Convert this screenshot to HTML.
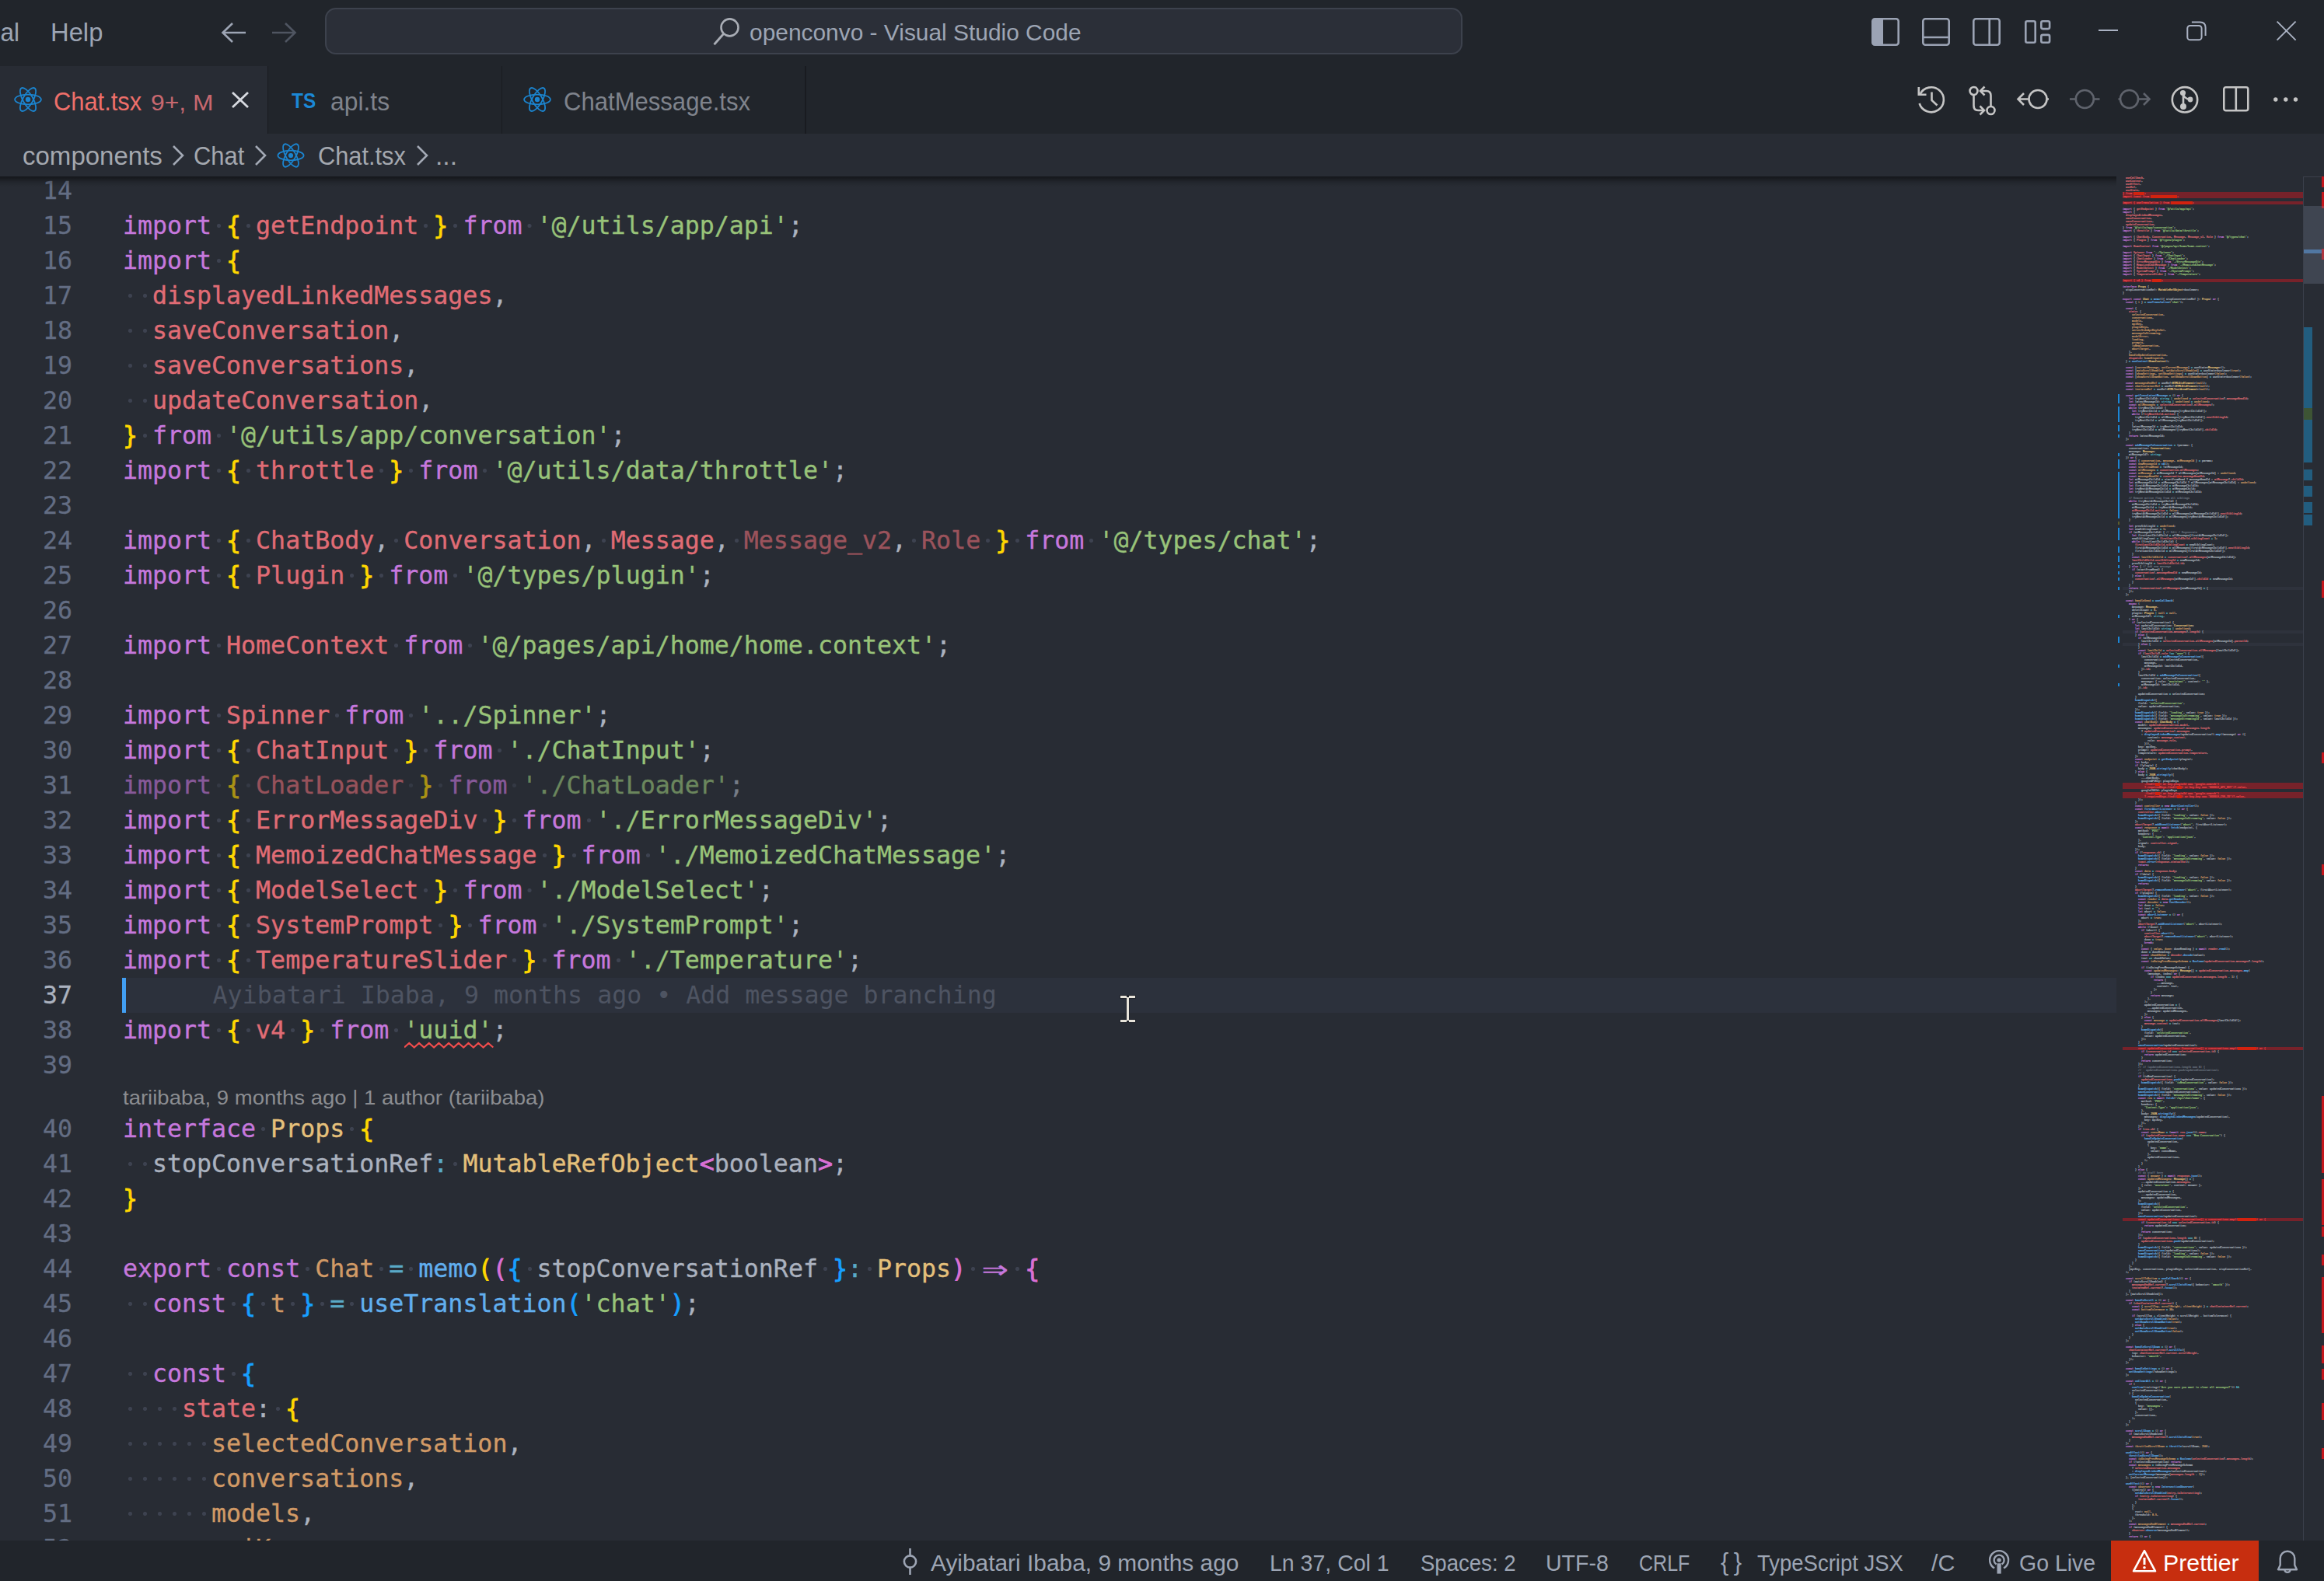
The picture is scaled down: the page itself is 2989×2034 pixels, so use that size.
<!DOCTYPE html><html lang="en"><head><meta charset="utf-8"><title>Chat.tsx - openconvo - Visual Studio Code</title><style>
*{box-sizing:border-box}
html,body{margin:0;padding:0}
body{width:2989px;height:2034px;overflow:hidden;position:relative;background:#282c34;font-family:"Liberation Sans","DejaVu Sans",sans-serif;color:#9da5b4}
.abs{position:absolute}
#title{left:0;top:0;width:2989px;height:85px;background:#21252b}
#tabs{left:0;top:85px;width:2989px;height:87px;background:#21252b}
#crumbs{left:0;top:172px;width:2989px;height:55px;background:#282c34}
#editor{left:0;top:227px;width:2722px;height:1755px;overflow:hidden;background:#282c34}
#status{left:0;top:1982px;width:2989px;height:52px;background:#21252b}
.ui{position:absolute;white-space:pre;line-height:1;transform-origin:0 0}
.ln{-webkit-text-stroke:.3px;position:absolute;left:0;width:93px;text-align:right;height:45px;line-height:45px;color:#636d83;font:31.6px/45px "DejaVu Sans Mono","Liberation Mono",monospace}
.cl{position:absolute;left:157.9px;height:45px;white-space:pre;font:31.6px/45px "DejaVu Sans Mono","Liberation Mono",monospace;color:#abb2bf}
.cl span,.cl i{font-style:normal}
.cl{-webkit-text-stroke:.35px}
.w{display:inline-block;width:19.03px;height:45px;vertical-align:top;background:radial-gradient(circle at 50% 50%,#3d4250 0,#3d4250 2.1px,rgba(61,66,80,0) 3px)}
.k{color:#c678dd}.v{color:#e06c75}.s{color:#98c379}.t{color:#e5c07b}.f{color:#61afef}.p{color:#abb2bf}.o{color:#5aaac8}.n{color:#d19a66}
.b1{color:#ffd700}.b2{color:#da70d6}.b3{color:#179fff}
.b1,.b2,.b3{-webkit-text-stroke:.8px}
.fd{opacity:.62}
.ar{display:inline-block;width:38.06px;text-align:center;letter-spacing:0;transform:scale(1.75,1.25);transform-origin:50% 58%}

#mmt{position:absolute;left:8px;top:0;margin:0;font:33.22px/40px "DejaVu Sans Mono","Liberation Mono",monospace;color:#abb2bf;white-space:pre;-webkit-text-stroke:2.5px;opacity:.9;transform:scale(.1);transform-origin:0 0}
#mmt span{-webkit-text-stroke:2.5px}
.mk{color:#c678dd}.mv{color:#e06c75}.ms{color:#98c379}.mt{color:#e5c07b}.mf{color:#61afef}.mp{color:#abb2bf}.mo{color:#56b6c2}.mn{color:#d19a66}.mc{color:#6b7280}.me{color:#f0484d}
</style></head><body>
<div id="editor" class="abs"><div class="abs" style="left:157px;top:1031px;width:2565px;height:45px;background:#2c313c"></div>
<div class="ln" style="top:-4px">14</div>
<div class="ln" style="top:41px">15</div>
<div class="cl" style="top:41px"><span class="k">import</span><i class="w"> </i><span class="b1">{</span><i class="w"> </i><span class="v">getEndpoint</span><i class="w"> </i><span class="b1">}</span><i class="w"> </i><span class="k">from</span><i class="w"> </i><span class="s">'@/utils/app/api'</span><span class="p">;</span></div>
<div class="ln" style="top:86px">16</div>
<div class="cl" style="top:86px"><span class="k">import</span><i class="w"> </i><span class="b1">{</span></div>
<div class="ln" style="top:131px">17</div>
<div class="cl" style="top:131px"><i class="w"> </i><i class="w"> </i><span class="v">displayedLinkedMessages</span><span class="p">,</span></div>
<div class="ln" style="top:176px">18</div>
<div class="cl" style="top:176px"><i class="w"> </i><i class="w"> </i><span class="v">saveConversation</span><span class="p">,</span></div>
<div class="ln" style="top:221px">19</div>
<div class="cl" style="top:221px"><i class="w"> </i><i class="w"> </i><span class="v">saveConversations</span><span class="p">,</span></div>
<div class="ln" style="top:266px">20</div>
<div class="cl" style="top:266px"><i class="w"> </i><i class="w"> </i><span class="v">updateConversation</span><span class="p">,</span></div>
<div class="ln" style="top:311px">21</div>
<div class="cl" style="top:311px"><span class="b1">}</span><i class="w"> </i><span class="k">from</span><i class="w"> </i><span class="s">'@/utils/app/conversation'</span><span class="p">;</span></div>
<div class="ln" style="top:356px">22</div>
<div class="cl" style="top:356px"><span class="k">import</span><i class="w"> </i><span class="b1">{</span><i class="w"> </i><span class="v">throttle</span><i class="w"> </i><span class="b1">}</span><i class="w"> </i><span class="k">from</span><i class="w"> </i><span class="s">'@/utils/data/throttle'</span><span class="p">;</span></div>
<div class="ln" style="top:401px">23</div>
<div class="ln" style="top:446px">24</div>
<div class="cl" style="top:446px"><span class="k">import</span><i class="w"> </i><span class="b1">{</span><i class="w"> </i><span class="v">ChatBody</span><span class="p">,</span><i class="w"> </i><span class="v">Conversation</span><span class="p">,</span><i class="w"> </i><span class="v">Message</span><span class="p">,</span><i class="w"> </i><span class="v fd">Message_v2</span><span class="p">,</span><i class="w"> </i><span class="v fd">Role</span><i class="w"> </i><span class="b1">}</span><i class="w"> </i><span class="k">from</span><i class="w"> </i><span class="s">'@/types/chat'</span><span class="p">;</span></div>
<div class="ln" style="top:491px">25</div>
<div class="cl" style="top:491px"><span class="k">import</span><i class="w"> </i><span class="b1">{</span><i class="w"> </i><span class="v">Plugin</span><i class="w"> </i><span class="b1">}</span><i class="w"> </i><span class="k">from</span><i class="w"> </i><span class="s">'@/types/plugin'</span><span class="p">;</span></div>
<div class="ln" style="top:536px">26</div>
<div class="ln" style="top:581px">27</div>
<div class="cl" style="top:581px"><span class="k">import</span><i class="w"> </i><span class="v">HomeContext</span><i class="w"> </i><span class="k">from</span><i class="w"> </i><span class="s">'@/pages/api/home/home.context'</span><span class="p">;</span></div>
<div class="ln" style="top:626px">28</div>
<div class="ln" style="top:671px">29</div>
<div class="cl" style="top:671px"><span class="k">import</span><i class="w"> </i><span class="v">Spinner</span><i class="w"> </i><span class="k">from</span><i class="w"> </i><span class="s">'../Spinner'</span><span class="p">;</span></div>
<div class="ln" style="top:716px">30</div>
<div class="cl" style="top:716px"><span class="k">import</span><i class="w"> </i><span class="b1">{</span><i class="w"> </i><span class="v">ChatInput</span><i class="w"> </i><span class="b1">}</span><i class="w"> </i><span class="k">from</span><i class="w"> </i><span class="s">'./ChatInput'</span><span class="p">;</span></div>
<div class="ln" style="top:761px">31</div>
<div class="cl" style="top:761px;opacity:.6"><span class="k">import</span><i class="w"> </i><span class="b1">{</span><i class="w"> </i><span class="v">ChatLoader</span><i class="w"> </i><span class="b1">}</span><i class="w"> </i><span class="k">from</span><i class="w"> </i><span class="s">'./ChatLoader'</span><span class="p">;</span></div>
<div class="ln" style="top:806px">32</div>
<div class="cl" style="top:806px"><span class="k">import</span><i class="w"> </i><span class="b1">{</span><i class="w"> </i><span class="v">ErrorMessageDiv</span><i class="w"> </i><span class="b1">}</span><i class="w"> </i><span class="k">from</span><i class="w"> </i><span class="s">'./ErrorMessageDiv'</span><span class="p">;</span></div>
<div class="ln" style="top:851px">33</div>
<div class="cl" style="top:851px"><span class="k">import</span><i class="w"> </i><span class="b1">{</span><i class="w"> </i><span class="v">MemoizedChatMessage</span><i class="w"> </i><span class="b1">}</span><i class="w"> </i><span class="k">from</span><i class="w"> </i><span class="s">'./MemoizedChatMessage'</span><span class="p">;</span></div>
<div class="ln" style="top:896px">34</div>
<div class="cl" style="top:896px"><span class="k">import</span><i class="w"> </i><span class="b1">{</span><i class="w"> </i><span class="v">ModelSelect</span><i class="w"> </i><span class="b1">}</span><i class="w"> </i><span class="k">from</span><i class="w"> </i><span class="s">'./ModelSelect'</span><span class="p">;</span></div>
<div class="ln" style="top:941px">35</div>
<div class="cl" style="top:941px"><span class="k">import</span><i class="w"> </i><span class="b1">{</span><i class="w"> </i><span class="v">SystemPrompt</span><i class="w"> </i><span class="b1">}</span><i class="w"> </i><span class="k">from</span><i class="w"> </i><span class="s">'./SystemPrompt'</span><span class="p">;</span></div>
<div class="ln" style="top:986px">36</div>
<div class="cl" style="top:986px"><span class="k">import</span><i class="w"> </i><span class="b1">{</span><i class="w"> </i><span class="v">TemperatureSlider</span><i class="w"> </i><span class="b1">}</span><i class="w"> </i><span class="k">from</span><i class="w"> </i><span class="s">'./Temperature'</span><span class="p">;</span></div>
<div class="ln" style="top:1031px;color:#abb2bf">37</div>
<div class="ln" style="top:1076px">38</div>
<div class="cl" style="top:1076px"><span class="k">import</span><i class="w"> </i><span class="b1">{</span><i class="w"> </i><span class="v">v4</span><i class="w"> </i><span class="b1">}</span><i class="w"> </i><span class="k">from</span><i class="w"> </i><span class="s sq">'uuid'</span><span class="p">;</span></div>
<div class="ln" style="top:1121px">39</div>
<div class="ln" style="top:1203px">40</div>
<div class="cl" style="top:1203px"><span class="k">interface</span><i class="w"> </i><span class="t">Props</span><i class="w"> </i><span class="b1">{</span></div>
<div class="ln" style="top:1248px">41</div>
<div class="cl" style="top:1248px"><i class="w"> </i><i class="w"> </i><span class="p">stopConversationRef</span><span class="o">:</span><i class="w"> </i><span class="t">MutableRefObject</span><span class="b2">&lt;</span><span class="p">boolean</span><span class="b2">&gt;</span><span class="p">;</span></div>
<div class="ln" style="top:1293px">42</div>
<div class="cl" style="top:1293px"><span class="b1">}</span></div>
<div class="ln" style="top:1338px">43</div>
<div class="ln" style="top:1383px">44</div>
<div class="cl" style="top:1383px"><span class="k">export</span><i class="w"> </i><span class="k">const</span><i class="w"> </i><span class="n">Chat</span><i class="w"> </i><span class="o">=</span><i class="w"> </i><span class="f">memo</span><span class="b1">(</span><span class="b2">(</span><span class="b3">{</span><i class="w"> </i><span class="p">stopConversationRef</span><i class="w"> </i><span class="b3">}</span><span class="o">:</span><i class="w"> </i><span class="t">Props</span><span class="b2">)</span><i class="w"> </i><span class="k ar">⇒</span><i class="w"> </i><span class="b2">{</span></div>
<div class="ln" style="top:1428px">45</div>
<div class="cl" style="top:1428px"><i class="w"> </i><i class="w"> </i><span class="k">const</span><i class="w"> </i><span class="b3">{</span><i class="w"> </i><span class="n">t</span><i class="w"> </i><span class="b3">}</span><i class="w"> </i><span class="o">=</span><i class="w"> </i><span class="f">useTranslation</span><span class="b3">(</span><span class="s">'chat'</span><span class="b3">)</span><span class="p">;</span></div>
<div class="ln" style="top:1473px">46</div>
<div class="ln" style="top:1518px">47</div>
<div class="cl" style="top:1518px"><i class="w"> </i><i class="w"> </i><span class="k">const</span><i class="w"> </i><span class="b3">{</span></div>
<div class="ln" style="top:1563px">48</div>
<div class="cl" style="top:1563px"><i class="w"> </i><i class="w"> </i><i class="w"> </i><i class="w"> </i><span class="v">state</span><span class="p">:</span><i class="w"> </i><span class="b1">{</span></div>
<div class="ln" style="top:1608px">49</div>
<div class="cl" style="top:1608px"><i class="w"> </i><i class="w"> </i><i class="w"> </i><i class="w"> </i><i class="w"> </i><i class="w"> </i><span class="n">selectedConversation</span><span class="p">,</span></div>
<div class="ln" style="top:1653px">50</div>
<div class="cl" style="top:1653px"><i class="w"> </i><i class="w"> </i><i class="w"> </i><i class="w"> </i><i class="w"> </i><i class="w"> </i><span class="n">conversations</span><span class="p">,</span></div>
<div class="ln" style="top:1698px">51</div>
<div class="cl" style="top:1698px"><i class="w"> </i><i class="w"> </i><i class="w"> </i><i class="w"> </i><i class="w"> </i><i class="w"> </i><span class="n">models</span><span class="p">,</span></div>
<div class="ln" style="top:1743px">52</div>
<div class="cl" style="top:1743px"><i class="w"> </i><i class="w"> </i><i class="w"> </i><i class="w"> </i><i class="w"> </i><i class="w"> </i><span class="n">apiKey</span><span class="p">,</span></div>
<div class="cl" style="top:1031px;left:273.6px;color:#4e5462;-webkit-text-stroke:0">Ayibatari Ibaba, 9 months ago • Add message branching</div>
<div class="abs" style="left:157px;top:1031px;width:5.3px;height:45px;background:#429ff3"></div>
<svg class="abs" style="left:519.5px;top:1113px" width="116" height="10" viewBox="0 0 116 10"><path d="M0 7.5 L6.3 2 L12.7 7.5 L19.0 2 L25.4 7.5 L31.8 2 L38.1 7.5 L44.4 2 L50.8 7.5 L57.1 2 L63.5 7.5 L69.8 2 L76.2 7.5 L82.5 2 L88.9 7.5 L95.2 2 L101.6 7.5 L107.9 2 L114.3 7.5" fill="none" stroke="#f14c4c" stroke-width="2.1"/></svg>
<div class="abs" style="left:0;top:0;width:2722px;height:13px;background:linear-gradient(rgba(0,0,0,.5),rgba(0,0,0,.18) 50%,rgba(0,0,0,0))"></div></div>
<div id="minimap" class="abs" style="left:2722px;top:227px;width:267px;height:1755px;overflow:hidden;background:#282c34">
<div class="abs" style="left:8px;top:20px;width:232px;height:4px;background:#77222a"></div>
<div class="abs" style="left:8px;top:24px;width:232px;height:4px;background:#77222a"></div>
<div class="abs" style="left:8px;top:32px;width:232px;height:4px;background:#77222a"></div>
<div class="abs" style="left:8px;top:132px;width:232px;height:4px;background:#77222a"></div>
<div class="abs" style="left:8px;top:780px;width:232px;height:4px;background:#77222a"></div>
<div class="abs" style="left:8px;top:784px;width:232px;height:4px;background:#77222a"></div>
<div class="abs" style="left:8px;top:792px;width:232px;height:4px;background:#77222a"></div>
<div class="abs" style="left:8px;top:796px;width:232px;height:4px;background:#77222a"></div>
<div class="abs" style="left:8px;top:1120px;width:232px;height:4px;background:#77222a"></div>
<div class="abs" style="left:8px;top:1340px;width:232px;height:4px;background:#77222a"></div>
<div class="abs" style="left:8px;top:528px;width:232px;height:4px;background:#2e323c"></div>
<div class="abs" style="left:8px;top:584px;width:232px;height:4px;background:#2e323c"></div>
<div class="abs" style="left:8px;top:600px;width:232px;height:4px;background:#2e323c"></div>
<div class="abs" style="left:2px;top:280px;width:2.2px;height:12px;background:#1b86d6"></div>
<div class="abs" style="left:2px;top:296px;width:2.2px;height:20px;background:#1b86d6"></div>
<div class="abs" style="left:2px;top:320px;width:2.2px;height:8px;background:#1b86d6"></div>
<div class="abs" style="left:2px;top:332px;width:2.2px;height:4px;background:#1b86d6"></div>
<div class="abs" style="left:2px;top:356px;width:2.2px;height:4px;background:#1b86d6"></div>
<div class="abs" style="left:2px;top:364px;width:2.2px;height:12px;background:#1b86d6"></div>
<div class="abs" style="left:2px;top:380px;width:2.2px;height:60px;background:#1b86d6"></div>
<div class="abs" style="left:2px;top:452px;width:2.2px;height:16px;background:#1b86d6"></div>
<div class="abs" style="left:2px;top:476px;width:2.2px;height:8px;background:#1b86d6"></div>
<div class="abs" style="left:2px;top:488px;width:2.2px;height:8px;background:#1b86d6"></div>
<div class="abs" style="left:2px;top:500px;width:2.2px;height:4px;background:#1b86d6"></div>
<div class="abs" style="left:2px;top:508px;width:2.2px;height:4px;background:#1b86d6"></div>
<div class="abs" style="left:2px;top:516px;width:2.2px;height:4px;background:#1b86d6"></div>
<div class="abs" style="left:2px;top:528px;width:2.2px;height:4px;background:#1b86d6"></div>
<div class="abs" style="left:2px;top:564px;width:2.2px;height:4px;background:#1b86d6"></div>
<div class="abs" style="left:2px;top:592px;width:2.2px;height:8px;background:#1b86d6"></div>
<div class="abs" style="left:2px;top:628px;width:2.2px;height:4px;background:#1b86d6"></div>
<div class="abs" style="left:2px;top:652px;width:2.2px;height:4px;background:#1b86d6"></div>
<div class="abs" style="left:2px;top:444px;width:2.2px;height:4px;background:#5b5d2c"></div>
<pre id="mmt">
  <span class="mv">useCallback</span><span class="mp">,</span>
  <span class="mv">useContext</span><span class="mp">,</span>
  <span class="mv">useEffect</span><span class="mp">,</span>
  <span class="mv">useRef</span><span class="mp">,</span>
  <span class="mv">useState</span><span class="mp">,</span>
<span class="me">} from 'react';</span>
<span class="me">import toast from 'react-hot-toast';</span>

<span class="me">import { useTranslation } from 'next-i18next';</span>

<span class="mk">import </span><span class="mp">{ </span><span class="mv">getEndpoint </span><span class="mp">} </span><span class="mk">from </span><span class="ms">'@/utils/app/api'</span><span class="mp">;</span>
<span class="mk">import </span><span class="mp">{</span>
  <span class="mv">displayedLinkedMessages</span><span class="mp">,</span>
  <span class="mv">saveConversation</span><span class="mp">,</span>
  <span class="mv">saveConversations</span><span class="mp">,</span>
  <span class="mv">updateConversation</span><span class="mp">,</span>
<span class="mp">} </span><span class="mk">from </span><span class="ms">'@/utils/app/conversation'</span><span class="mp">;</span>
<span class="mk">import </span><span class="mp">{ </span><span class="mv">throttle </span><span class="mp">} </span><span class="mk">from </span><span class="ms">'@/utils/data/throttle'</span><span class="mp">;</span>

<span class="mk">import </span><span class="mp">{ </span><span class="mv">ChatBody</span><span class="mp">, </span><span class="mv">Conversation</span><span class="mp">, </span><span class="mv">Message</span><span class="mp">, </span><span class="mv">Message_v2</span><span class="mp">, </span><span class="mv">Role </span><span class="mp">} </span><span class="mk">from </span><span class="ms">'@/types/chat'</span><span class="mp">;</span>
<span class="mk">import </span><span class="mp">{ </span><span class="mv">Plugin </span><span class="mp">} </span><span class="mk">from </span><span class="ms">'@/types/plugin'</span><span class="mp">;</span>

<span class="mk">import </span><span class="mv">HomeContext </span><span class="mk">from </span><span class="ms">'@/pages/api/home/home.context'</span><span class="mp">;</span>

<span class="mk">import </span><span class="mv">Spinner </span><span class="mk">from </span><span class="ms">'../Spinner'</span><span class="mp">;</span>
<span class="mk">import </span><span class="mp">{ </span><span class="mv">ChatInput </span><span class="mp">} </span><span class="mk">from </span><span class="ms">'./ChatInput'</span><span class="mp">;</span>
<span class="mk">import </span><span class="mp">{ </span><span class="mv">ChatLoader </span><span class="mp">} </span><span class="mk">from </span><span class="ms">'./ChatLoader'</span><span class="mp">;</span>
<span class="mk">import </span><span class="mp">{ </span><span class="mv">ErrorMessageDiv </span><span class="mp">} </span><span class="mk">from </span><span class="ms">'./ErrorMessageDiv'</span><span class="mp">;</span>
<span class="mk">import </span><span class="mp">{ </span><span class="mv">MemoizedChatMessage </span><span class="mp">} </span><span class="mk">from </span><span class="ms">'./MemoizedChatMessage'</span><span class="mp">;</span>
<span class="mk">import </span><span class="mp">{ </span><span class="mv">ModelSelect </span><span class="mp">} </span><span class="mk">from </span><span class="ms">'./ModelSelect'</span><span class="mp">;</span>
<span class="mk">import </span><span class="mp">{ </span><span class="mv">SystemPrompt </span><span class="mp">} </span><span class="mk">from </span><span class="ms">'./SystemPrompt'</span><span class="mp">;</span>
<span class="mk">import </span><span class="mp">{ </span><span class="mv">TemperatureSlider </span><span class="mp">} </span><span class="mk">from </span><span class="ms">'./Temperature'</span><span class="mp">;</span>

<span class="me">import { v4 } from 'uuid';</span>

<span class="mk">interface </span><span class="mt">Props </span><span class="mp">{</span>
  <span class="mp">stopConversationRef: </span><span class="mt">MutableRefObject</span><span class="mp">&lt;boolean&gt;;</span>
<span class="mp">}</span>

<span class="mk">export const </span><span class="mt">Chat </span><span class="mo">= </span><span class="mf">memo</span><span class="mp">(({ stopConversationRef }: </span><span class="mt">Props</span><span class="mp">) </span><span class="mk">=&gt; </span><span class="mp">{</span>
  <span class="mk">const </span><span class="mp">{ </span><span class="mn">t </span><span class="mp">} </span><span class="mo">= </span><span class="mf">useTranslation</span><span class="mp">(</span><span class="ms">'chat'</span><span class="mp">);</span>

  <span class="mk">const </span><span class="mp">{</span>
    <span class="mv">state</span><span class="mp">: {</span>
      <span class="mn">selectedConversation</span><span class="mp">,</span>
      <span class="mn">conversations</span><span class="mp">,</span>
      <span class="mn">models</span><span class="mp">,</span>
      <span class="mn">apiKey</span><span class="mp">,</span>
      <span class="mn">pluginKeys</span><span class="mp">,</span>
      <span class="mn">serverSideApiKeyIsSet</span><span class="mp">,</span>
      <span class="mn">messageIsStreaming</span><span class="mp">,</span>
      <span class="mn">modelError</span><span class="mp">,</span>
      <span class="mn">loading</span><span class="mp">,</span>
      <span class="mn">prompts</span><span class="mp">,</span>
      <span class="mn">isNewConversation</span><span class="mp">,</span>
      <span class="mn">abortTarget</span><span class="mp">,</span>
    <span class="mp">},</span>
    <span class="mn">handleUpdateConversation</span><span class="mp">,</span>
    <span class="mv">dispatch</span><span class="mp">: </span><span class="mn">homeDispatch</span><span class="mp">,</span>
  <span class="mp">} </span><span class="mo">= </span><span class="mf">useContext</span><span class="mp">(</span><span class="mt">HomeContext</span><span class="mp">);</span>

  <span class="mk">const </span><span class="mp">[</span><span class="mn">currentMessage</span><span class="mp">, </span><span class="mn">setCurrentMessage</span><span class="mp">] </span><span class="mo">= </span><span class="mp">useState&lt;</span><span class="mt">Message</span><span class="mp">&gt;();</span>
  <span class="mk">const </span><span class="mp">[</span><span class="mn">autoScrollEnabled</span><span class="mp">, </span><span class="mn">setAutoScrollEnabled</span><span class="mp">] </span><span class="mo">= </span><span class="mp">useState&lt;boolean&gt;(</span><span class="mn">true</span><span class="mp">);</span>
  <span class="mk">const </span><span class="mp">[</span><span class="mn">showSettings</span><span class="mp">, </span><span class="mn">setShowSettings</span><span class="mp">] </span><span class="mo">= </span><span class="mp">useState&lt;boolean&gt;(</span><span class="mn">false</span><span class="mp">);</span>
  <span class="mk">const </span><span class="mp">[</span><span class="mn">showScrollDownButton</span><span class="mp">, </span><span class="mn">setShowScrollDownButton</span><span class="mp">] </span><span class="mo">= </span><span class="mp">useState&lt;boolean&gt;(</span><span class="mn">false</span><span class="mp">);</span>

  <span class="mk">const </span><span class="mn">messagesEndRef </span><span class="mo">= </span><span class="mp">useRef&lt;</span><span class="mt">HTMLDivElement</span><span class="mp">&gt;(</span><span class="mn">null</span><span class="mp">);</span>
  <span class="mk">const </span><span class="mn">chatContainerRef </span><span class="mo">= </span><span class="mp">useRef&lt;</span><span class="mt">HTMLDivElement</span><span class="mp">&gt;(</span><span class="mn">null</span><span class="mp">);</span>
  <span class="mk">const </span><span class="mn">textareaRef </span><span class="mo">= </span><span class="mp">useRef&lt;</span><span class="mt">HTMLTextAreaElement</span><span class="mp">&gt;(</span><span class="mn">null</span><span class="mp">);</span>

  <span class="mk">const </span><span class="mf">getConvoLatestMessage </span><span class="mo">= </span><span class="mp">() </span><span class="mk">=&gt; </span><span class="mp">{</span>
    <span class="mk">let </span><span class="mp">tryNextChildId: </span><span class="mo">string | </span><span class="mn">undefined </span><span class="mo">= </span><span class="mv">selectedConversation</span><span class="mp">?.</span><span class="mv">messageHeadId</span><span class="mp">;</span>
    <span class="mk">let </span><span class="mp">latestMessageId: </span><span class="mo">string | </span><span class="mn">undefined </span><span class="mo">= </span><span class="mn">undefined</span><span class="mp">;</span>
    <span class="mk">const </span><span class="mn">allMessages </span><span class="mo">= </span><span class="mv">selectedConversation</span><span class="mp">?.</span><span class="mv">allMessages</span><span class="mp">!;</span>
    <span class="mk">while </span><span class="mp">(tryNextChildId) {</span>
      <span class="mk">let </span><span class="mp">tryNextChild </span><span class="mo">= </span><span class="mp">allMessages[tryNextChildId!];</span>
      <span class="mk">while </span><span class="mp">(!</span><span class="mv">tryNextChild</span><span class="mp">.</span><span class="mv">active</span><span class="mp">) {</span>
        <span class="mp">tryNextChildId </span><span class="mo">= </span><span class="mp">allMessages[tryNextChildId!].</span><span class="mv">nextSiblingId</span><span class="mp">;</span>
        <span class="mp">tryNextChild </span><span class="mo">= </span><span class="mp">allMessages[tryNextChildId!];</span>
      <span class="mp">}</span>
      <span class="mp">latestMessageId </span><span class="mo">= </span><span class="mp">tryNextChildId;</span>
      <span class="mp">tryNextChildId </span><span class="mo">= </span><span class="mp">allMessages![tryNextChildId!].</span><span class="mv">childId</span><span class="mp">;</span>
    <span class="mp">}</span>
    <span class="mk">return </span><span class="mp">latestMessageId;</span>
  <span class="mp">};</span>

  <span class="mk">const </span><span class="mf">addMessageToConversation </span><span class="mo">= </span><span class="mp">(params: {</span>
    <span class="mp">conversation: </span><span class="mt">Conversation</span><span class="mp">;</span>
    <span class="mp">message: </span><span class="mt">Message</span><span class="mp">;</span>
    <span class="mp">atMessageId?: </span><span class="mo">string</span><span class="mp">;</span>
  <span class="mp">}) </span><span class="mk">=&gt; </span><span class="mp">{</span>
    <span class="mk">const </span><span class="mp">{ </span><span class="mn">conversation</span><span class="mp">, </span><span class="mn">message</span><span class="mp">, </span><span class="mn">atMessageId </span><span class="mp">} </span><span class="mo">= </span><span class="mp">params;</span>
    <span class="mk">const </span><span class="mn">newMessageId </span><span class="mo">= </span><span class="mf">v4</span><span class="mp">();</span>
    <span class="mk">const </span><span class="mn">startFromHead </span><span class="mo">= </span><span class="mp">!atMessageId;</span>
    <span class="mk">const </span><span class="mn">allMessages </span><span class="mo">= </span><span class="mv">conversation</span><span class="mp">.</span><span class="mv">allMessages</span><span class="mp">;</span>
    <span class="mk">const </span><span class="mn">atMessage </span><span class="mo">= </span><span class="mp">atMessageId ? allMessages[atMessageId] : </span><span class="mn">undefined</span><span class="mp">;</span>
    <span class="mk">const </span><span class="mn">messageHeadId </span><span class="mo">= </span><span class="mv">conversation</span><span class="mp">.</span><span class="mv">messageHeadId</span><span class="mp">;</span>
    <span class="mk">let </span><span class="mp">atMessageChildId </span><span class="mo">= </span><span class="mp">startFromHead ? messageHeadId : </span><span class="mv">atMessage</span><span class="mp">?.</span><span class="mv">childId</span><span class="mp">;</span>
    <span class="mk">let </span><span class="mp">atMessageChild </span><span class="mo">= </span><span class="mp">atMessageChildId ? allMessages[atMessageChildId] : </span><span class="mn">undefined</span><span class="mp">;</span>
    <span class="mk">let </span><span class="mp">firstAtMessageChildId </span><span class="mo">= </span><span class="mp">atMessageChildId;</span>
    <span class="mk">let </span><span class="mp">tryNextAtMessageChild </span><span class="mo">= </span><span class="mp">atMessageChild;</span>
    <span class="mk">let </span><span class="mp">tryNextAtMessageChildId </span><span class="mo">= </span><span class="mp">atMessageChildId;</span>

    <span class="mc">// Remove active flag from all siblings</span>
    <span class="mk">while </span><span class="mp">(tryNextAtMessageChild) {</span>
      <span class="mp">atMessageChildId </span><span class="mo">= </span><span class="mp">tryNextAtMessageChildId;</span>
      <span class="mp">atMessageChild </span><span class="mo">= </span><span class="mp">tryNextAtMessageChild;</span>
      <span class="mv">atMessageChild</span><span class="mp">.</span><span class="mv">active </span><span class="mo">= </span><span class="mn">false</span><span class="mp">;</span>
      <span class="mp">tryNextAtMessageChildId </span><span class="mo">= </span><span class="mp">allMessages[atMessageChildId!].</span><span class="mv">nextSiblingId</span><span class="mp">;</span>
      <span class="mp">tryNextAtMessageChild </span><span class="mo">= </span><span class="mp">allMessages[tryNextAtMessageChildId!];</span>
    <span class="mp">}</span>

    <span class="mk">let </span><span class="mp">prevSiblingId </span><span class="mo">= </span><span class="mn">undefined</span><span class="mp">;</span>
    <span class="mk">let </span><span class="mp">newSiblingCount </span><span class="mo">= </span><span class="mn">1</span><span class="mp">;</span>
    <span class="mk">if </span><span class="mp">(atMessageChildId) { </span><span class="mc">// Edit / Regenerate</span>
      <span class="mk">let </span><span class="mp">firstLastChildChild </span><span class="mo">= </span><span class="mp">allMessages[firstAtMessageChildId!];</span>
      <span class="mp">newSiblingCount </span><span class="mo">= </span><span class="mv">firstLastChildChild</span><span class="mp">.</span><span class="mv">siblingCount </span><span class="mo">+ </span><span class="mn">1</span><span class="mp">;</span>
      <span class="mk">while </span><span class="mp">(firstLastChildChild) {</span>
        <span class="mv">firstLastChildChild</span><span class="mp">.</span><span class="mv">siblingCount </span><span class="mo">= </span><span class="mp">newSiblingCount;</span>
        <span class="mp">firstAtMessageChildId </span><span class="mo">= </span><span class="mp">allMessages[firstAtMessageChildId!].</span><span class="mv">nextSiblingId</span><span class="mp">;</span>
        <span class="mp">firstLastChildChild </span><span class="mo">= </span><span class="mp">allMessages[firstAtMessageChildId!];</span>
      <span class="mp">}</span>
      <span class="mk">const </span><span class="mn">lastChildChild </span><span class="mo">= </span><span class="mv">conversation</span><span class="mp">!.</span><span class="mv">allMessages</span><span class="mp">[atMessageChildId];</span>
      <span class="mv">lastChildChild</span><span class="mp">.</span><span class="mv">nextSiblingId </span><span class="mo">= </span><span class="mp">newMessageId;</span>
      <span class="mp">prevSiblingId </span><span class="mo">= </span><span class="mv">lastChildChild</span><span class="mp">.</span><span class="mv">id</span><span class="mp">;</span>
    <span class="mp">} </span><span class="mk">else </span><span class="mp">{ </span><span class="mc">// Add new message</span>
      <span class="mk">if </span><span class="mp">(startFromHead) {</span>
        <span class="mv">conversation</span><span class="mp">!.</span><span class="mv">messageHeadId </span><span class="mo">= </span><span class="mp">newMessageId;</span>
      <span class="mp">} </span><span class="mk">else </span><span class="mp">{</span>
        <span class="mv">conversation</span><span class="mp">!.</span><span class="mv">allMessages</span><span class="mp">[atMessageId!].</span><span class="mv">childId </span><span class="mo">= </span><span class="mp">newMessageId;</span>
      <span class="mp">}</span>
    <span class="mp">}</span>
    <span class="mk">return </span><span class="mp">(</span><span class="mv">conversation</span><span class="mp">!.</span><span class="mv">allMessages</span><span class="mp">[newMessageId] </span><span class="mo">= </span><span class="mp">{</span>
    <span class="mp">});</span>
  <span class="mp">};</span>

  <span class="mk">const </span><span class="mn">handleSend </span><span class="mo">= </span><span class="mf">useCallback</span><span class="mp">(</span>
    <span class="mk">async </span><span class="mp">(</span>
      <span class="mp">message: </span><span class="mt">Message</span><span class="mp">,</span>
      <span class="mp">deleteCount </span><span class="mo">= </span><span class="mn">0</span><span class="mp">,</span>
      <span class="mp">plugin: </span><span class="mt">Plugin </span><span class="mo">| </span><span class="mn">null </span><span class="mo">= </span><span class="mn">null</span><span class="mp">,</span>
      <span class="mp">atMessageId?: </span><span class="mo">string</span><span class="mp">,</span>
    <span class="mp">) </span><span class="mk">=&gt; </span><span class="mp">{</span>
      <span class="mk">if </span><span class="mp">(selectedConversation) {</span>
        <span class="mk">let </span><span class="mp">updatedConversation: </span><span class="mt">Conversation</span><span class="mp">;</span>
        <span class="mk">let </span><span class="mp">lastChildId: </span><span class="mo">string | </span><span class="mn">undefined</span><span class="mp">;</span>
        <span class="mk">if </span><span class="mp">(</span><span class="mv">selectedConversation</span><span class="mp">.</span><span class="mv">messages</span><span class="mp">?.</span><span class="mv">length</span><span class="mp">) {</span>
        <span class="mp">} </span><span class="mk">else </span><span class="mp">{</span>
          <span class="mk">if </span><span class="mp">(atMessageId) {</span>
            <span class="mp">lastChildId </span><span class="mo">= </span><span class="mv">selectedConversation</span><span class="mp">.</span><span class="mv">allMessages</span><span class="mp">[atMessageId].</span><span class="mv">parentId</span><span class="mp">;</span>
          <span class="mp">} </span><span class="mk">else </span><span class="mp">{</span>
          <span class="mp">}</span>
          <span class="mk">const </span><span class="mn">lastChild </span><span class="mo">= </span><span class="mv">selectedConversation</span><span class="mp">.</span><span class="mv">allMessages</span><span class="mp">[lastChildId!];</span>
          <span class="mk">if </span><span class="mp">(</span><span class="mv">lastChild</span><span class="mp">?.</span><span class="mv">role </span><span class="mo">!== </span><span class="ms">'user'</span><span class="mp">) {</span>
            <span class="mp">lastChildId </span><span class="mo">= </span><span class="mf">addMessageToConversation</span><span class="mp">({</span>
              <span class="mp">conversation: selectedConversation,</span>
              <span class="mp">message,</span>
              <span class="mp">atMessageId: lastChildId,</span>
            <span class="mp">}).</span><span class="mv">id</span><span class="mp">;</span>
          <span class="mp">}</span>
          <span class="mp">lastChildId </span><span class="mo">= </span><span class="mf">addMessageToConversation</span><span class="mp">({</span>
            <span class="mp">conversation: selectedConversation,</span>
            <span class="mp">message: { role: </span><span class="ms">'assistant'</span><span class="mp">, content: </span><span class="ms">'' </span><span class="mp">},</span>
            <span class="mp">atMessageId: lastChildId,</span>
          <span class="mp">}).</span><span class="mv">id</span><span class="mp">;</span>

          <span class="mp">updatedConversation </span><span class="mo">= </span><span class="mp">selectedConversation;</span>
        <span class="mp">}</span>
        <span class="mf">homeDispatch</span><span class="mp">({</span>
          <span class="mp">field: </span><span class="ms">'selectedConversation'</span><span class="mp">,</span>
          <span class="mp">value: updatedConversation,</span>
        <span class="mp">});</span>
        <span class="mf">homeDispatch</span><span class="mp">({ field: </span><span class="ms">'loading'</span><span class="mp">, value: </span><span class="mn">true </span><span class="mp">});</span>
        <span class="mf">homeDispatch</span><span class="mp">({ field: </span><span class="ms">'messageIsStreaming'</span><span class="mp">, value: </span><span class="mn">true </span><span class="mp">});</span>
        <span class="mf">homeDispatch</span><span class="mp">({ field: </span><span class="ms">'messageStreamingId'</span><span class="mp">, value: lastChildId });</span>
        <span class="mk">const </span><span class="mn">chatBody</span><span class="mp">: </span><span class="mt">ChatBody </span><span class="mo">= </span><span class="mp">{</span>
          <span class="mp">model: </span><span class="mv">updatedConversation</span><span class="mp">.</span><span class="mv">model</span><span class="mp">,</span>
          <span class="mp">messages: </span><span class="mv">updatedConversation</span><span class="mp">!.</span><span class="mv">messages</span><span class="mp">.</span><span class="mv">length</span>
            <span class="mp">? </span><span class="mv">updatedConversation</span><span class="mp">!.</span><span class="mv">messages</span>
            <span class="mp">: </span><span class="mf">displayedLinkedMessages</span><span class="mp">(updatedConversation!).</span><span class="mf">map</span><span class="mp">((message) </span><span class="mk">=&gt; </span><span class="mp">({</span>
                <span class="mp">content: </span><span class="mv">message</span><span class="mp">.</span><span class="mv">content</span><span class="mp">,</span>
                <span class="mp">role: </span><span class="mv">message</span><span class="mp">.</span><span class="mv">role</span><span class="mp">,</span>
              <span class="mp">})),</span>
          <span class="mp">key: apiKey,</span>
          <span class="mp">prompt: </span><span class="mv">updatedConversation</span><span class="mp">.</span><span class="mv">prompt</span><span class="mp">,</span>
          <span class="mp">temperature: </span><span class="mv">updatedConversation</span><span class="mp">.</span><span class="mv">temperature</span><span class="mp">,</span>
        <span class="mp">};</span>
        <span class="mk">const </span><span class="mn">endpoint </span><span class="mo">= </span><span class="mf">getEndpoint</span><span class="mp">(plugin);</span>
        <span class="mk">let </span><span class="mp">body;</span>
        <span class="mk">if </span><span class="mp">(!plugin) {</span>
          <span class="mp">body </span><span class="mo">= </span><span class="mt">JSON</span><span class="mp">.</span><span class="mf">stringify</span><span class="mp">(chatBody);</span>
        <span class="mp">} </span><span class="mk">else </span><span class="mp">{</span>
          <span class="mp">body </span><span class="mo">= </span><span class="mt">JSON</span><span class="mp">.</span><span class="mf">stringify</span><span class="mp">({</span>
            <span class="mp">...chatBody,</span>
            <span class="mp">googleAPIKey: pluginKeys</span>
<span class="me">              .find((key) =&gt; key.pluginId === 'google-search')</span>
<span class="me">              ?.requiredKeys.find((key) =&gt; key.key === 'GOOGLE_API_KEY')?.value,</span>
            <span class="mp">googleCSEId: pluginKeys</span>
<span class="me">              .find((key) =&gt; key.pluginId === 'google-search')</span>
<span class="me">              ?.requiredKeys.find((key) =&gt; key.key === 'GOOGLE_CSE_ID')?.value,</span>
          <span class="mp">});</span>
        <span class="mp">}</span>
        <span class="mk">const </span><span class="mn">controller </span><span class="mo">= </span><span class="mk">new </span><span class="mf">AbortController</span><span class="mp">();</span>
        <span class="mk">const </span><span class="mf">firstAbortListener </span><span class="mo">= </span><span class="mp">() </span><span class="mk">=&gt; </span><span class="mp">{</span>
          <span class="mv">controller</span><span class="mp">.</span><span class="mf">abort</span><span class="mp">();</span>
          <span class="mf">homeDispatch</span><span class="mp">({ field: </span><span class="ms">'loading'</span><span class="mp">, value: </span><span class="mn">false </span><span class="mp">});</span>
          <span class="mf">homeDispatch</span><span class="mp">({ field: </span><span class="ms">'messageIsStreaming'</span><span class="mp">, value: </span><span class="mn">false </span><span class="mp">});</span>
        <span class="mp">};</span>
        <span class="mv">abortTarget</span><span class="mp">?.</span><span class="mf">addEventListener</span><span class="mp">(</span><span class="ms">'abort'</span><span class="mp">, firstAbortListener);</span>
        <span class="mk">const </span><span class="mn">response </span><span class="mo">= </span><span class="mk">await </span><span class="mf">fetch</span><span class="mp">(endpoint, {</span>
          <span class="mp">method: </span><span class="ms">'POST'</span><span class="mp">,</span>
          <span class="mp">headers: {</span>
            <span class="ms">'Content-Type'</span><span class="mp">: </span><span class="ms">'application/json'</span><span class="mp">,</span>
          <span class="mp">},</span>
          <span class="mp">signal: </span><span class="mv">controller</span><span class="mp">.</span><span class="mv">signal</span><span class="mp">,</span>
          <span class="mp">body,</span>
        <span class="mp">});</span>
        <span class="mk">if </span><span class="mp">(!</span><span class="mv">response</span><span class="mp">.</span><span class="mv">ok</span><span class="mp">) {</span>
          <span class="mf">homeDispatch</span><span class="mp">({ field: </span><span class="ms">'loading'</span><span class="mp">, value: </span><span class="mn">false </span><span class="mp">});</span>
          <span class="mf">homeDispatch</span><span class="mp">({ field: </span><span class="ms">'messageIsStreaming'</span><span class="mp">, value: </span><span class="mn">false </span><span class="mp">});</span>
          <span class="mv">toast</span><span class="mp">.</span><span class="mf">error</span><span class="mp">(</span><span class="mv">response</span><span class="mp">.</span><span class="mv">statusText</span><span class="mp">);</span>
          <span class="mk">return</span><span class="mp">;</span>
        <span class="mp">}</span>
        <span class="mk">const </span><span class="mn">data </span><span class="mo">= </span><span class="mv">response</span><span class="mp">.</span><span class="mv">body</span><span class="mp">;</span>
        <span class="mk">if </span><span class="mp">(!data) {</span>
          <span class="mf">homeDispatch</span><span class="mp">({ field: </span><span class="ms">'loading'</span><span class="mp">, value: </span><span class="mn">false </span><span class="mp">});</span>
          <span class="mf">homeDispatch</span><span class="mp">({ field: </span><span class="ms">'messageIsStreaming'</span><span class="mp">, value: </span><span class="mn">false </span><span class="mp">});</span>
          <span class="mk">return</span><span class="mp">;</span>
        <span class="mp">}</span>
        <span class="mv">abortTarget</span><span class="mp">?.</span><span class="mf">removeEventListener</span><span class="mp">(</span><span class="ms">'abort'</span><span class="mp">, firstAbortListener);</span>
        <span class="mk">if </span><span class="mp">(!plugin) {</span>
          <span class="mf">homeDispatch</span><span class="mp">({ field: </span><span class="ms">'loading'</span><span class="mp">, value: </span><span class="mn">false </span><span class="mp">});</span>
          <span class="mk">const </span><span class="mn">reader </span><span class="mo">= </span><span class="mv">data</span><span class="mp">.</span><span class="mf">getReader</span><span class="mp">();</span>
          <span class="mk">const </span><span class="mn">decoder </span><span class="mo">= </span><span class="mk">new </span><span class="mf">TextDecoder</span><span class="mp">();</span>
          <span class="mk">let </span><span class="mp">done </span><span class="mo">= </span><span class="mn">false</span><span class="mp">;</span>
          <span class="mk">let </span><span class="mp">text </span><span class="mo">= </span><span class="ms">''</span><span class="mp">;</span>
          <span class="mk">let </span><span class="mp">abort </span><span class="mo">= </span><span class="mn">false</span><span class="mp">;</span>
          <span class="mk">const </span><span class="mf">abortListener </span><span class="mo">= </span><span class="mp">() </span><span class="mk">=&gt; </span><span class="mp">{</span>
            <span class="mp">abort </span><span class="mo">= </span><span class="mn">true</span><span class="mp">;</span>
          <span class="mp">};</span>
          <span class="mv">abortTarget</span><span class="mp">?.</span><span class="mf">addEventListener</span><span class="mp">(</span><span class="ms">'abort'</span><span class="mp">, abortListener);</span>
          <span class="mk">while </span><span class="mp">(!done) {</span>
            <span class="mk">if </span><span class="mp">(abort) {</span>
              <span class="mv">controller</span><span class="mp">.</span><span class="mf">abort</span><span class="mp">();</span>
              <span class="mv">abortTarget</span><span class="mp">?.</span><span class="mf">removeEventListener</span><span class="mp">(</span><span class="ms">'abort'</span><span class="mp">, abortListener);</span>
              <span class="mp">done </span><span class="mo">= </span><span class="mn">true</span><span class="mp">;</span>
              <span class="mk">break</span><span class="mp">;</span>
            <span class="mp">}</span>
            <span class="mk">const </span><span class="mp">{ </span><span class="mn">value</span><span class="mp">, </span><span class="mn">done</span><span class="mp">: doneReading } </span><span class="mo">= </span><span class="mk">await </span><span class="mv">reader</span><span class="mp">.</span><span class="mf">read</span><span class="mp">();</span>
            <span class="mp">done </span><span class="mo">= </span><span class="mp">doneReading;</span>
            <span class="mk">const </span><span class="mn">chunkValue </span><span class="mo">= </span><span class="mv">decoder</span><span class="mp">.</span><span class="mf">decode</span><span class="mp">(value);</span>
            <span class="mp">text </span><span class="mo">+= </span><span class="mp">chunkValue;</span>
            <span class="mk">const </span><span class="mn">isUsingPrevMessageSchema </span><span class="mo">= </span><span class="mf">Boolean</span><span class="mp">(</span><span class="mv">updatedConversation</span><span class="mp">.</span><span class="mv">messages</span><span class="mp">?.</span><span class="mv">length</span><span class="mp">);</span>

            <span class="mk">if </span><span class="mp">(isUsingPrevMessageSchema) {</span>
              <span class="mk">const </span><span class="mn">updatedMessages</span><span class="mp">: </span><span class="mt">Message</span><span class="mp">[] </span><span class="mo">= </span><span class="mv">updatedConversation</span><span class="mp">.</span><span class="mv">messages</span><span class="mp">.</span><span class="mf">map</span><span class="mp">(</span>
                <span class="mp">(message, index) </span><span class="mk">=&gt; </span><span class="mp">{</span>
                  <span class="mk">if </span><span class="mp">(index </span><span class="mo">=== </span><span class="mv">updatedConversation</span><span class="mp">.</span><span class="mv">messages</span><span class="mp">.</span><span class="mv">length </span><span class="mo">- </span><span class="mn">1</span><span class="mp">) {</span>
                    <span class="mk">return </span><span class="mp">{</span>
                      <span class="mp">...message,</span>
                      <span class="mp">content: text,</span>
                    <span class="mp">};</span>
                  <span class="mp">}</span>
                  <span class="mk">return </span><span class="mp">message;</span>
                <span class="mp">},</span>
              <span class="mp">);</span>
              <span class="mp">updatedConversation </span><span class="mo">= </span><span class="mp">{</span>
                <span class="mp">...updatedConversation,</span>
                <span class="mp">messages: updatedMessages,</span>
              <span class="mp">};</span>
            <span class="mp">} </span><span class="mk">else </span><span class="mp">{</span>
              <span class="mk">const </span><span class="mn">message </span><span class="mo">= </span><span class="mv">updatedConversation</span><span class="mp">.</span><span class="mv">allMessages</span><span class="mp">[lastChildId!];</span>
              <span class="mv">message</span><span class="mp">.</span><span class="mv">content </span><span class="mo">= </span><span class="mp">text;</span>
            <span class="mp">}</span>
            <span class="mf">homeDispatch</span><span class="mp">({</span>
              <span class="mp">field: </span><span class="ms">'selectedConversation'</span><span class="mp">,</span>
              <span class="mp">value: updatedConversation,</span>
            <span class="mp">});</span>
          <span class="mp">}</span>
          <span class="mf">saveConversation</span><span class="mp">(updatedConversation);</span>
<span class="me">          const updatedConversations: Conversation[] = conversations.map((conversation) =&gt; {</span>
            <span class="mk">if </span><span class="mp">(</span><span class="mv">conversation</span><span class="mp">.</span><span class="mv">id </span><span class="mo">=== </span><span class="mv">selectedConversation</span><span class="mp">.</span><span class="mv">id</span><span class="mp">) {</span>
              <span class="mk">return </span><span class="mp">updatedConversation;</span>
            <span class="mp">}</span>
            <span class="mk">return </span><span class="mp">conversation;</span>
          <span class="mp">});</span>
          <span class="mc">// if (updatedConversations.length === 0) {</span>
          <span class="mc">//   updatedConversations.push(updatedConversation);</span>
          <span class="mc">// }</span>
          <span class="mk">if </span><span class="mp">(isNewConversation) {</span>
            <span class="mv">updatedConversations</span><span class="mp">.</span><span class="mf">push</span><span class="mp">(updatedConversation);</span>
            <span class="mf">homeDispatch</span><span class="mp">({ field: </span><span class="ms">'isNewConversation'</span><span class="mp">, value: </span><span class="mn">false </span><span class="mp">});</span>
          <span class="mp">}</span>
          <span class="mf">homeDispatch</span><span class="mp">({ field: </span><span class="ms">'conversations'</span><span class="mp">, value: updatedConversations });</span>
          <span class="mf">saveConversations</span><span class="mp">(updatedConversations);</span>
          <span class="mf">homeDispatch</span><span class="mp">({ field: </span><span class="ms">'messageIsStreaming'</span><span class="mp">, value: </span><span class="mn">false </span><span class="mp">});</span>
          <span class="mk">const </span><span class="mn">res </span><span class="mo">= </span><span class="mk">await </span><span class="mf">fetch</span><span class="mp">(</span><span class="ms">'/api/chat/name'</span><span class="mp">, {</span>
            <span class="mp">method: </span><span class="ms">'POST'</span><span class="mp">,</span>
            <span class="mp">headers: {</span>
              <span class="ms">'Content-Type'</span><span class="mp">: </span><span class="ms">'application/json'</span><span class="mp">,</span>
            <span class="mp">},</span>
            <span class="mp">body: </span><span class="mt">JSON</span><span class="mp">.</span><span class="mf">stringify</span><span class="mp">({</span>
              <span class="mp">messages: </span><span class="mf">displayedLinkedMessages</span><span class="mp">(updatedConversation),</span>
              <span class="mp">key: apiKey,</span>
            <span class="mp">}),</span>
          <span class="mp">});</span>
          <span class="mk">if </span><span class="mp">(</span><span class="mv">res</span><span class="mp">.</span><span class="mv">ok</span><span class="mp">) {</span>
            <span class="mk">const </span><span class="mn">convoName </span><span class="mo">= </span><span class="mp">(</span><span class="mk">await </span><span class="mv">res</span><span class="mp">.</span><span class="mf">json</span><span class="mp">()).</span><span class="mv">name</span><span class="mp">;</span>
            <span class="mk">if </span><span class="mp">(</span><span class="mv">updatedConversation</span><span class="mp">.</span><span class="mv">name </span><span class="mo">=== </span><span class="ms">'New Conversation'</span><span class="mp">) {</span>
              <span class="mf">handleUpdateConversation</span><span class="mp">(</span>
                <span class="mp">updatedConversation,</span>
                <span class="mp">{</span>
                  <span class="mp">key: </span><span class="ms">'name'</span><span class="mp">,</span>
                  <span class="mp">value: convoName,</span>
                <span class="mp">},</span>
                <span class="mp">updatedConversations,</span>
              <span class="mp">);</span>
            <span class="mp">}</span>
          <span class="mp">}</span>
        <span class="mp">} </span><span class="mk">else </span><span class="mp">{</span>
          <span class="mc">// do stuff here</span>
          <span class="mk">const </span><span class="mp">{ </span><span class="mn">answer </span><span class="mp">} </span><span class="mo">= </span><span class="mk">await </span><span class="mv">response</span><span class="mp">.</span><span class="mf">json</span><span class="mp">();</span>
          <span class="mk">const </span><span class="mn">updatedMessages</span><span class="mp">: </span><span class="mt">Message</span><span class="mp">[] </span><span class="mo">= </span><span class="mp">[</span>
            <span class="mp">...updatedConversation.</span><span class="mv">messages</span><span class="mp">,</span>
            <span class="mp">{ role: </span><span class="ms">'assistant'</span><span class="mp">, content: answer },</span>
          <span class="mp">];</span>
          <span class="mp">updatedConversation </span><span class="mo">= </span><span class="mp">{</span>
            <span class="mp">...updatedConversation,</span>
            <span class="mp">messages: updatedMessages,</span>
          <span class="mp">};</span>
          <span class="mf">homeDispatch</span><span class="mp">({</span>
            <span class="mp">field: </span><span class="ms">'selectedConversation'</span><span class="mp">,</span>
            <span class="mp">value: updateConversation,</span>
          <span class="mp">});</span>
          <span class="mf">saveConversation</span><span class="mp">(updatedConversation);</span>
<span class="me">          const updatedConversations: Conversation[] = conversations.map((conversation) =&gt; {</span>
            <span class="mk">if </span><span class="mp">(</span><span class="mv">conversation</span><span class="mp">.</span><span class="mv">id </span><span class="mo">=== </span><span class="mv">selectedConversation</span><span class="mp">.</span><span class="mv">id</span><span class="mp">) {</span>
              <span class="mk">return </span><span class="mp">updatedConversation;</span>
            <span class="mp">}</span>
            <span class="mk">return </span><span class="mp">conversation;</span>
          <span class="mp">});</span>
          <span class="mk">if </span><span class="mp">(</span><span class="mv">updatedConversations</span><span class="mp">.</span><span class="mv">length </span><span class="mo">=== </span><span class="mn">0</span><span class="mp">) {</span>
            <span class="mv">updatedConversations</span><span class="mp">.</span><span class="mf">push</span><span class="mp">(updatedConversation);</span>
          <span class="mp">}</span>
          <span class="mf">homeDispatch</span><span class="mp">({ field: </span><span class="ms">'conversations'</span><span class="mp">, value: updatedConversations });</span>
          <span class="mf">saveConversations</span><span class="mp">(updatedConversations);</span>
          <span class="mf">homeDispatch</span><span class="mp">({ field: </span><span class="ms">'loading'</span><span class="mp">, value: </span><span class="mn">false </span><span class="mp">});</span>
          <span class="mf">homeDispatch</span><span class="mp">({ field: </span><span class="ms">'messageIsStreaming'</span><span class="mp">, value: </span><span class="mn">false </span><span class="mp">});</span>
        <span class="mp">}</span>
      <span class="mp">}</span>
    <span class="mp">},</span>
    <span class="mp">[apiKey, conversations, pluginKeys, selectedConversation, stopConversationRef],</span>
  <span class="mp">);</span>

  <span class="mk">const </span><span class="mn">scrollToBottom </span><span class="mo">= </span><span class="mf">useCallback</span><span class="mp">(() </span><span class="mk">=&gt; </span><span class="mp">{</span>
    <span class="mk">if </span><span class="mp">(autoScrollEnabled) {</span>
      <span class="mv">messagesEndRef</span><span class="mp">.</span><span class="mv">current</span><span class="mp">?.</span><span class="mf">scrollIntoView</span><span class="mp">({ behavior: </span><span class="ms">'smooth' </span><span class="mp">});</span>
      <span class="mv">textareaRef</span><span class="mp">.</span><span class="mv">current</span><span class="mp">?.</span><span class="mf">focus</span><span class="mp">();</span>
    <span class="mp">}</span>
  <span class="mp">}, [autoScrollEnabled]);</span>

  <span class="mk">const </span><span class="mf">handleScroll </span><span class="mo">= </span><span class="mp">() </span><span class="mk">=&gt; </span><span class="mp">{</span>
    <span class="mk">if </span><span class="mp">(</span><span class="mv">chatContainerRef</span><span class="mp">.</span><span class="mv">current</span><span class="mp">) {</span>
      <span class="mk">const </span><span class="mp">{ </span><span class="mn">scrollTop</span><span class="mp">, </span><span class="mn">scrollHeight</span><span class="mp">, </span><span class="mn">clientHeight </span><span class="mp">} </span><span class="mo">= </span><span class="mv">chatContainerRef</span><span class="mp">.</span><span class="mv">current</span><span class="mp">;</span>
      <span class="mk">const </span><span class="mn">bottomTolerance </span><span class="mo">= </span><span class="mn">30</span><span class="mp">;</span>

      <span class="mk">if </span><span class="mp">(scrollTop </span><span class="mo">+ </span><span class="mp">clientHeight &lt; scrollHeight </span><span class="mo">- </span><span class="mp">bottomTolerance) {</span>
        <span class="mf">setAutoScrollEnabled</span><span class="mp">(</span><span class="mn">false</span><span class="mp">);</span>
        <span class="mf">setShowScrollDownButton</span><span class="mp">(</span><span class="mn">true</span><span class="mp">);</span>
      <span class="mp">} </span><span class="mk">else </span><span class="mp">{</span>
        <span class="mf">setAutoScrollEnabled</span><span class="mp">(</span><span class="mn">true</span><span class="mp">);</span>
        <span class="mf">setShowScrollDownButton</span><span class="mp">(</span><span class="mn">false</span><span class="mp">);</span>
      <span class="mp">}</span>
    <span class="mp">}</span>
  <span class="mp">};</span>

  <span class="mk">const </span><span class="mf">handleScrollDown </span><span class="mo">= </span><span class="mp">() </span><span class="mk">=&gt; </span><span class="mp">{</span>
    <span class="mv">chatContainerRef</span><span class="mp">.</span><span class="mv">current</span><span class="mp">?.</span><span class="mf">scrollTo</span><span class="mp">({</span>
      <span class="mp">top: </span><span class="mv">chatContainerRef</span><span class="mp">.</span><span class="mv">current</span><span class="mp">.</span><span class="mv">scrollHeight</span><span class="mp">,</span>
      <span class="mp">behavior: </span><span class="ms">'smooth'</span><span class="mp">,</span>
    <span class="mp">});</span>
  <span class="mp">};</span>

  <span class="mk">const </span><span class="mf">handleSettings </span><span class="mo">= </span><span class="mp">() </span><span class="mk">=&gt; </span><span class="mp">{</span>
    <span class="mf">setShowSettings</span><span class="mp">(!showSettings);</span>
  <span class="mp">};</span>

  <span class="mk">const </span><span class="mf">onClearAll </span><span class="mo">= </span><span class="mp">() </span><span class="mk">=&gt; </span><span class="mp">{</span>
    <span class="mk">if </span><span class="mp">(</span>
      <span class="mf">confirm</span><span class="mp">(t&lt;string&gt;(</span><span class="ms">'Are you sure you want to clear all messages?'</span><span class="mp">)) </span><span class="mo">&amp;&amp;</span>
      <span class="mp">selectedConversation</span>
    <span class="mp">) {</span>
      <span class="mf">handleUpdateConversation</span><span class="mp">(</span>
        <span class="mp">selectedConversation,</span>
        <span class="mp">{</span>
          <span class="mp">key: </span><span class="ms">'messages'</span><span class="mp">,</span>
          <span class="mp">value: [],</span>
        <span class="mp">},</span>
        <span class="mp">conversations,</span>
      <span class="mp">);</span>
    <span class="mp">}</span>
  <span class="mp">};</span>

  <span class="mk">const </span><span class="mf">scrollDown </span><span class="mo">= </span><span class="mp">() </span><span class="mk">=&gt; </span><span class="mp">{</span>
    <span class="mk">if </span><span class="mp">(autoScrollEnabled) {</span>
      <span class="mv">messagesEndRef</span><span class="mp">.</span><span class="mv">current</span><span class="mp">?.</span><span class="mf">scrollIntoView</span><span class="mp">(</span><span class="mn">true</span><span class="mp">);</span>
    <span class="mp">}</span>
  <span class="mp">};</span>
  <span class="mk">const </span><span class="mn">throttledScrollDown </span><span class="mo">= </span><span class="mf">throttle</span><span class="mp">(scrollDown, </span><span class="mn">250</span><span class="mp">);</span>

  <span class="mf">useEffect</span><span class="mp">(() </span><span class="mk">=&gt; </span><span class="mp">{</span>
    <span class="mf">throttledScrollDown</span><span class="mp">();</span>
    <span class="mk">const </span><span class="mn">isUsingPrevMessageSchema </span><span class="mo">= </span><span class="mf">Boolean</span><span class="mp">(</span><span class="mv">selectedConversation</span><span class="mp">?.</span><span class="mv">messages</span><span class="mp">.</span><span class="mv">length</span><span class="mp">);</span>
    <span class="mk">if </span><span class="mp">(!selectedConversation) </span><span class="mk">return</span><span class="mp">;</span>
    <span class="mk">const </span><span class="mn">messages </span><span class="mo">= </span><span class="mp">isUsingPrevMessageSchema</span>
      <span class="mp">? </span><span class="mv">selectedConversation</span><span class="mp">.</span><span class="mv">messages</span>
      <span class="mp">: </span><span class="mf">displayedLinkedMessages</span><span class="mp">(selectedConversation);</span>
    <span class="mf">setCurrentMessage</span><span class="mp">(messages[</span><span class="mv">messages</span><span class="mp">.</span><span class="mv">length </span><span class="mo">- </span><span class="mn">2</span><span class="mp">]);</span>
  <span class="mp">}, [selectedConversation]);</span>

  <span class="mf">useEffect</span><span class="mp">(() </span><span class="mk">=&gt; </span><span class="mp">{</span>
    <span class="mk">const </span><span class="mn">observer </span><span class="mo">= </span><span class="mk">new </span><span class="mf">IntersectionObserver</span><span class="mp">(</span>
      <span class="mp">([entry]) </span><span class="mk">=&gt; </span><span class="mp">{</span>
        <span class="mf">setAutoScrollEnabled</span><span class="mp">(</span><span class="mv">entry</span><span class="mp">.</span><span class="mv">isIntersecting</span><span class="mp">);</span>
        <span class="mk">if </span><span class="mp">(</span><span class="mv">entry</span><span class="mp">.</span><span class="mv">isIntersecting</span><span class="mp">) {</span>
          <span class="mv">textareaRef</span><span class="mp">.</span><span class="mv">current</span><span class="mp">?.</span><span class="mf">focus</span><span class="mp">();</span>
        <span class="mp">}</span>
      <span class="mp">},</span>
      <span class="mp">{</span>
        <span class="mp">root: </span><span class="mn">null</span><span class="mp">,</span>
        <span class="mp">threshold: </span><span class="mn">0.5</span><span class="mp">,</span>
      <span class="mp">},</span>
    <span class="mp">);</span>
    <span class="mk">const </span><span class="mn">messagesEndElement </span><span class="mo">= </span><span class="mv">messagesEndRef</span><span class="mp">.</span><span class="mv">current</span><span class="mp">;</span>
    <span class="mk">if </span><span class="mp">(messagesEndElement) {</span>
      <span class="mv">observer</span><span class="mp">.</span><span class="mf">observe</span><span class="mp">(messagesEndElement);</span>
    <span class="mp">}</span>
    <span class="mk">return </span><span class="mp">() </span><span class="mk">=&gt; </span><span class="mp">{</span>
</pre>
<div class="abs" style="left:22px;top:20px;width:14px;height:4px;background:#d3220f"></div>
<div class="abs" style="left:44px;top:24px;width:34px;height:4px;background:#d3220f"></div>
<div class="abs" style="left:70px;top:32px;width:28px;height:4px;background:#d3220f"></div>
<div class="abs" style="left:46px;top:132px;width:12px;height:4px;background:#d3220f"></div>
<div class="abs" style="left:50px;top:780px;width:6px;height:4px;background:#d3220f"></div>
<div class="abs" style="left:78px;top:784px;width:6px;height:4px;background:#d3220f"></div>
<div class="abs" style="left:50px;top:792px;width:6px;height:4px;background:#d3220f"></div>
<div class="abs" style="left:78px;top:796px;width:6px;height:4px;background:#d3220f"></div>
<div class="abs" style="left:156px;top:1120px;width:24px;height:4px;background:#d3220f"></div>
<div class="abs" style="left:156px;top:1340px;width:24px;height:4px;background:#d3220f"></div>
<div class="abs" style="left:240px;top:0;width:27px;height:1755px;background:#282c34;border-left:1.5px solid #3b404b;border-top:1px solid #3b404b"></div>
<div class="abs" style="left:240.8px;top:194px;width:11px;height:104px;background:#225d7f"></div>
<div class="abs" style="left:240.8px;top:312.5px;width:11px;height:55px;background:#225d7f"></div>
<div class="abs" style="left:240.8px;top:377px;width:11px;height:14px;background:#225d7f"></div>
<div class="abs" style="left:240.8px;top:398px;width:11px;height:14px;background:#225d7f"></div>
<div class="abs" style="left:240.8px;top:419px;width:11px;height:14px;background:#225d7f"></div>
<div class="abs" style="left:240.8px;top:435px;width:11px;height:14px;background:#225d7f"></div>
<div class="abs" style="left:240.8px;top:298px;width:11px;height:14.5px;background:#3d5434"></div>
<div class="abs" style="left:264px;top:0px;width:3px;height:13.5px;background:#c4161c"></div>
<div class="abs" style="left:264px;top:20px;width:3px;height:20.5px;background:#c4161c"></div>
<div class="abs" style="left:264px;top:93px;width:3px;height:14px;background:#c4161c"></div>
<div class="abs" style="left:264px;top:519.5px;width:3px;height:22.5px;background:#c4161c"></div>
<div class="abs" style="left:264px;top:741px;width:3px;height:14px;background:#c4161c"></div>
<div class="abs" style="left:264px;top:885px;width:3px;height:14px;background:#c4161c"></div>
<div class="abs" style="left:264px;top:1183px;width:3px;height:98.5px;background:#c4161c"></div>
<div class="abs" style="left:264px;top:1290px;width:3px;height:59px;background:#c4161c"></div>
<div class="abs" style="left:264px;top:1351px;width:3px;height:13px;background:#c4161c"></div>
<div class="abs" style="left:264px;top:1387px;width:3px;height:14px;background:#c4161c"></div>
<div class="abs" style="left:264px;top:1416px;width:3px;height:72px;background:#c4161c"></div>
<div class="abs" style="left:264px;top:1504px;width:3px;height:23px;background:#c4161c"></div>
<div class="abs" style="left:264px;top:1534px;width:3px;height:14px;background:#c4161c"></div>
<div class="abs" style="left:264px;top:1578px;width:3px;height:22px;background:#c4161c"></div>
<div class="abs" style="left:264px;top:1636px;width:3px;height:14px;background:#c4161c"></div>
<div class="abs" style="left:240.8px;top:94px;width:23.2px;height:5px;background:#4173a8"></div>
<div class="abs" style="left:241px;top:38px;width:26px;height:100px;background:rgba(120,128,150,.30)"></div>
</div>
<div id="title" class="abs"><svg class="abs" style="left:284.9px;top:29.0px;overflow:visible" width="31" height="26" viewBox="0 0 31 26"><path d="M14 1 L1.5 13 L14 25 M2 13 H31" fill="none" stroke="#9da5b4" stroke-width="2.6"/></svg>
<svg class="abs" style="left:350.0px;top:29.0px;overflow:visible" width="31" height="26" viewBox="0 0 31 26"><path d="M17 1 L29.5 13 L17 25 M29 13 H0" fill="none" stroke="#4f5561" stroke-width="2.6"/></svg>
<div class="abs" style="left:418px;top:10px;width:1463px;height:60px;border:2px solid #3d424d;border-radius:14px;background:#2b2f38"></div>
<svg class="abs" style="left:916.0px;top:21.0px;overflow:visible" width="38" height="38" viewBox="0 0 38 38"><circle cx="22.5" cy="14.4" r="11" fill="none" stroke="#a9adb5" stroke-width="2.6"/><path d="M14.6 22.5 L2.5 36.2" stroke="#a9adb5" stroke-width="2.8" fill="none"/></svg>
<svg class="abs" style="left:2406.7px;top:23.0px;overflow:visible" width="36" height="36" viewBox="0 0 36 36"><rect x="1.3" y="1.3" width="33.4" height="33.4" rx="3" fill="none" stroke="#9ba3b4" stroke-width="2.6"/><path d="M1.3 4 Q1.3 1.3 4 1.3 H15 V34.7 H4 Q1.3 34.7 1.3 32 Z" fill="#9ba3b4"/></svg>
<svg class="abs" style="left:2471.7px;top:23.0px;overflow:visible" width="36" height="36" viewBox="0 0 36 36"><rect x="1.3" y="1.3" width="33.4" height="33.4" rx="3" fill="none" stroke="#9ba3b4" stroke-width="2.6"/><path d="M1.3 25 H34.7" stroke="#9ba3b4" stroke-width="2.6"/></svg>
<svg class="abs" style="left:2536.7px;top:23.0px;overflow:visible" width="36" height="36" viewBox="0 0 36 36"><rect x="1.3" y="1.3" width="33.4" height="33.4" rx="3" fill="none" stroke="#9ba3b4" stroke-width="2.6"/><path d="M21.7 1.3 V34.7" stroke="#9ba3b4" stroke-width="2.6"/></svg>
<svg class="abs" style="left:2604.0px;top:26.0px;overflow:visible" width="34" height="30" viewBox="0 0 34 30"><rect x="1.3" y="1.3" width="12.4" height="27.4" rx="2" fill="none" stroke="#9ba3b4" stroke-width="2.6"/><rect x="21.3" y="1.3" width="10.8" height="9.8" rx="2" fill="none" stroke="#9ba3b4" stroke-width="2.6"/><rect x="21.3" y="18.9" width="10.8" height="9.8" rx="2" fill="none" stroke="#9ba3b4" stroke-width="2.6"/></svg>
<div class="abs" style="left:2699px;top:37.7px;width:25px;height:2.3px;background:#aab2c3"></div>
<svg class="abs" style="left:2812.0px;top:26.0px;overflow:visible" width="27" height="28" viewBox="0 0 27 28"><rect x="1.3" y="6.9" width="18.3" height="18.4" rx="3.6" fill="none" stroke="#aab2c3" stroke-width="2"/><path d="M6.9 2.6 H17.6 Q24.6 2.6 24.6 9.6 V19.9" fill="none" stroke="#aab2c3" stroke-width="2"/></svg>
<svg class="abs" style="left:2928.0px;top:27.0px;overflow:visible" width="25" height="25" viewBox="0 0 25 25"><path d="M0.6 0.6 L24.6 24.6 M24.6 0.6 L0.6 24.6" stroke="#aab2c3" stroke-width="1.9" fill="none"/></svg></div>
<div id="tabs" class="abs"><div class="abs" style="left:0;top:0;width:344px;height:87px;background:#282c34"></div>
<div class="abs" style="left:343.5px;top:0;width:1.5px;height:87px;background:#191b20"></div>
<div class="abs" style="left:644.5px;top:0;width:1.5px;height:87px;background:#191b20"></div>
<div class="abs" style="left:1035.3px;top:0;width:1.5px;height:87px;background:#191b20"></div>
<svg class="abs" style="left:15.5px;top:23.0px;overflow:visible" width="40" height="40" viewBox="-20 -20 40 40"><ellipse rx="16.9" ry="6.4" transform="rotate(0)" fill="none" stroke="#1b85d0" stroke-width="1.8"/><ellipse rx="16.9" ry="6.4" transform="rotate(60)" fill="none" stroke="#1b85d0" stroke-width="1.8"/><ellipse rx="16.9" ry="6.4" transform="rotate(120)" fill="none" stroke="#1b85d0" stroke-width="1.8"/><circle r="3.2" fill="#1b85d0"/></svg>
<svg class="abs" style="left:671.0px;top:23.0px;overflow:visible" width="40" height="40" viewBox="-20 -20 40 40"><ellipse rx="16.9" ry="6.4" transform="rotate(0)" fill="none" stroke="#1b85d0" stroke-width="1.8"/><ellipse rx="16.9" ry="6.4" transform="rotate(60)" fill="none" stroke="#1b85d0" stroke-width="1.8"/><ellipse rx="16.9" ry="6.4" transform="rotate(120)" fill="none" stroke="#1b85d0" stroke-width="1.8"/><circle r="3.2" fill="#1b85d0"/></svg>
<svg class="abs" style="left:298.0px;top:33.0px;overflow:visible" width="22" height="21" viewBox="0 0 22 21"><path d="M1 1 L21 20 M21 1 L1 20" stroke="#d7dae0" stroke-width="2.8" fill="none"/></svg>
<svg class="abs" style="left:2466.0px;top:25.0px;overflow:visible" width="37" height="37" viewBox="0 0 37 37"><path d="M3.4 11.5 A16 16 0 1 1 2.6 23" fill="none" stroke="#c5c5c5" stroke-width="2.6"/><path d="M1.8 2 V11.8 H11.5" fill="none" stroke="#c5c5c5" stroke-width="2.6"/><path d="M18.5 8.5 V19 L25.5 25.5" fill="none" stroke="#c5c5c5" stroke-width="2.6"/></svg>
<svg class="abs" style="left:2531.0px;top:25.0px;overflow:visible" width="38" height="39" viewBox="0 0 38 39"><circle cx="7.5" cy="7" r="5" fill="none" stroke="#c5c5c5" stroke-width="2.6"/><circle cx="29.5" cy="32" r="5" fill="none" stroke="#c5c5c5" stroke-width="2.6"/><path d="M7.5 12 V26 Q7.5 32 13.5 32 H20" fill="none" stroke="#c5c5c5" stroke-width="2.6"/><path d="M15.5 26.5 L21 32 L15.5 37.5" fill="none" stroke="#c5c5c5" stroke-width="2.6"/><path d="M29.5 27 V13 Q29.5 7 23.5 7 H17" fill="none" stroke="#c5c5c5" stroke-width="2.6"/><path d="M21.5 1.5 L16 7 L21.5 12.5" fill="none" stroke="#c5c5c5" stroke-width="2.6"/></svg>
<svg class="abs" style="left:2594.0px;top:29.0px;overflow:visible" width="42" height="28" viewBox="0 0 42 28"><circle cx="27" cy="13.5" r="11.5" fill="none" stroke="#c5c5c5" stroke-width="2.6"/><path d="M1.5 13.5 H15 M9 6 L1.5 13.5 L9 21 M38.5 13.5 H41" fill="none" stroke="#c5c5c5" stroke-width="2.6"/></svg>
<svg class="abs" style="left:2661.5px;top:29.0px;overflow:visible" width="39" height="28" viewBox="0 0 39 28"><circle cx="19.3" cy="13.5" r="11.5" fill="none" stroke="#5f636c" stroke-width="2.6"/><path d="M0 13.5 H7.5 M31 13.5 H38.5" fill="none" stroke="#5f636c" stroke-width="2.6"/></svg>
<svg class="abs" style="left:2723.5px;top:29.0px;overflow:visible" width="42" height="28" viewBox="0 0 42 28"><circle cx="14.5" cy="13.5" r="11.5" fill="none" stroke="#5f636c" stroke-width="2.6"/><path d="M0.5 13.5 H3 M26 13.5 H40.5 M33 6 L40.5 13.5 L33 21" fill="none" stroke="#5f636c" stroke-width="2.6"/></svg>
<svg class="abs" style="left:2792.0px;top:25.0px;overflow:visible" width="37" height="37" viewBox="0 0 37 37"><circle cx="18" cy="18.3" r="16.2" fill="none" stroke="#c5c5c5" stroke-width="2.6"/><circle cx="15.5" cy="9.5" r="3.6" fill="#c5c5c5"/><circle cx="25" cy="18" r="3.4" fill="#c5c5c5"/><circle cx="16" cy="27" r="4" fill="#c5c5c5"/><path d="M16 27 V10 M16 10 Q16.5 17 25 18" fill="none" stroke="#c5c5c5" stroke-width="2.6"/></svg>
<svg class="abs" style="left:2859.0px;top:26.0px;overflow:visible" width="34" height="33" viewBox="0 0 34 33"><rect x="1.3" y="1.3" width="31" height="30" rx="2.5" fill="none" stroke="#c5c5c5" stroke-width="2.6"/><path d="M16.8 1.3 V31.3" stroke="#c5c5c5" stroke-width="2.6"/></svg>
<svg class="abs" style="left:2923.0px;top:39.0px;overflow:visible" width="34" height="8" viewBox="0 0 34 8"><circle cx="3.8" cy="4" r="2.7" fill="#c5c5c5"/><circle cx="16.8" cy="4" r="2.7" fill="#c5c5c5"/><circle cx="29.5" cy="4" r="2.7" fill="#c5c5c5"/></svg></div>
<div id="crumbs" class="abs"><svg class="abs" style="left:221.0px;top:14.5px;overflow:visible" width="16" height="26" viewBox="0 0 16 26"><path d="M2 1 L14 13 L2 25" fill="none" stroke="#a3a9b5" stroke-width="2.6"/></svg>
<svg class="abs" style="left:327.3px;top:14.5px;overflow:visible" width="16" height="26" viewBox="0 0 16 26"><path d="M2 1 L14 13 L2 25" fill="none" stroke="#a3a9b5" stroke-width="2.6"/></svg>
<svg class="abs" style="left:535.3px;top:14.5px;overflow:visible" width="16" height="26" viewBox="0 0 16 26"><path d="M2 1 L14 13 L2 25" fill="none" stroke="#a3a9b5" stroke-width="2.6"/></svg>
<svg class="abs" style="left:354.3px;top:8.0px;overflow:visible" width="40" height="40" viewBox="-20 -20 40 40"><ellipse rx="16.6" ry="6.3" transform="rotate(0)" fill="none" stroke="#1b85d0" stroke-width="1.8"/><ellipse rx="16.6" ry="6.3" transform="rotate(60)" fill="none" stroke="#1b85d0" stroke-width="1.8"/><ellipse rx="16.6" ry="6.3" transform="rotate(120)" fill="none" stroke="#1b85d0" stroke-width="1.8"/><circle r="3.1" fill="#1b85d0"/></svg></div>
<div id="status" class="abs"><svg class="abs" style="left:1160.0px;top:10.0px;overflow:visible" width="21" height="34" viewBox="0 0 21 34"><circle cx="10.5" cy="17" r="7.6" fill="none" stroke="#9da5b4" stroke-width="2.6"/><path d="M10.5 0 V9.4 M10.5 24.6 V34" stroke="#9da5b4" stroke-width="2.6" fill="none"/></svg>
<svg class="abs" style="left:2556.0px;top:11.0px;overflow:visible" width="30" height="34" viewBox="0 0 30 34"><path d="M9.1 24.5 A12 12 0 1 1 21.1 24.5" fill="none" stroke="#9da5b4" stroke-width="2.4"/><path d="M11.6 19.6 A6.5 6.5 0 1 1 18.6 19.6" fill="none" stroke="#9da5b4" stroke-width="2.4"/><circle cx="15.1" cy="14.1" r="2.7" fill="#9da5b4"/><path d="M12.5 18.3 H17.7 V31.6 H12.5 Z" fill="#9da5b4"/></svg>
<div class="abs" style="left:2715px;top:0;width:190px;height:52px;background:#c72e0f"></div>
<svg class="abs" style="left:2741.5px;top:11.2px;overflow:visible" width="32" height="30" viewBox="0 0 32 30"><path d="M16 2.2 L30 28.3 H2 Z" fill="none" stroke="#fff" stroke-width="2.6" stroke-linejoin="round"/><path d="M16 11 V20" stroke="#fff" stroke-width="3"/><circle cx="16" cy="23.8" r="1.8" fill="#fff"/></svg>
<svg class="abs" style="left:2927.0px;top:12.0px;overflow:visible" width="30" height="33" viewBox="0 0 30 33"><path d="M3 25.2 H27 L24.3 19.5 V11 A9.3 9.3 0 0 0 5.7 11 V19.5 Z" fill="none" stroke="#9da5b4" stroke-width="2.4" stroke-linejoin="round"/><path d="M11.4 26 A3.7 3.7 0 0 0 18.6 26" fill="none" stroke="#9da5b4" stroke-width="2.4"/></svg></div>
<div id="labels"><div class="ui" id="t_term" style="left:-93.9px;top:26.4px;font-size:32.5px;color:#9da5b4;transform:scaleX(0.9700);">Terminal</div>
<div class="ui" id="t_help" style="left:64.8px;top:26.4px;font-size:32.5px;color:#9da5b4;transform:scaleX(1.0078);">Help</div>
<div class="ui" id="t_title" style="left:963.9px;top:26.5px;font-size:30px;color:#9da5b4;transform:scaleX(0.9965);">openconvo - Visual Studio Code</div>
<div class="ui" id="tab1" style="left:69.3px;top:115.0px;font-size:32.5px;color:#ee6f6a;transform:scaleX(0.9492);">Chat.tsx</div>
<div class="ui" id="tab1b" style="left:194.1px;top:117.1px;font-size:30px;color:#c8686f;transform:scaleX(1.0603);">9+, M</div>
<div class="ui" id="tab2i" style="left:375.0px;top:115.5px;font-size:28px;color:#1b88d6;transform:scaleX(0.8714);font-weight:bold">TS</div>
<div class="ui" id="tab2" style="left:425.2px;top:115.0px;font-size:32.5px;color:#7f838c;transform:scaleX(0.9789);">api.ts</div>
<div class="ui" id="tab3" style="left:725.0px;top:115.0px;font-size:32.5px;color:#7f838c;transform:scaleX(0.9560);">ChatMessage.tsx</div>
<div class="ui" id="c1" style="left:29.0px;top:184.8px;font-size:32.5px;color:#a4a8af;transform:scaleX(1.0160);">components</div>
<div class="ui" id="c2" style="left:248.5px;top:184.8px;font-size:32.5px;color:#a4a8af;transform:scaleX(0.9500);">Chat</div>
<div class="ui" id="c3" style="left:409.1px;top:184.8px;font-size:32.5px;color:#a4a8af;transform:scaleX(0.9466);">Chat.tsx</div>
<div class="ui" id="c4" style="left:559.9px;top:184.8px;font-size:32.5px;color:#a4a8af;transform:scaleX(1.0364);">...</div>
<div class="ui" id="codelens" style="left:158.0px;top:1399.0px;font-size:26.5px;color:#8b8d91;transform:scaleX(1.0384);">tariibaba, 9 months ago | 1 author (tariibaba)</div>
<div class="ui" id="s1" style="left:1197.0px;top:1995.6px;font-size:30px;color:#9da5b4;transform:scaleX(0.9960);">Ayibatari Ibaba, 9 months ago</div>
<div class="ui" id="s2" style="left:1632.6px;top:1995.6px;font-size:30px;color:#9da5b4;transform:scaleX(0.9497);">Ln 37, Col 1</div>
<div class="ui" id="s3" style="left:1826.8px;top:1995.6px;font-size:30px;color:#9da5b4;transform:scaleX(0.9183);">Spaces: 2</div>
<div class="ui" id="s4" style="left:1988.1px;top:1995.6px;font-size:30px;color:#9da5b4;transform:scaleX(0.9512);">UTF-8</div>
<div class="ui" id="s5" style="left:2108.0px;top:1995.6px;font-size:30px;color:#9da5b4;transform:scaleX(0.8338);">CRLF</div>
<div class="ui" id="s6" style="left:2213.0px;top:1993.8px;font-size:31px;color:#9da5b4;transform:scaleX(1.0000);letter-spacing:6.5px">{}</div>
<div class="ui" id="s7" style="left:2259.9px;top:1995.6px;font-size:30px;color:#9da5b4;transform:scaleX(0.9161);">TypeScript JSX</div>
<div class="ui" id="s8" style="left:2483.7px;top:1995.6px;font-size:30px;color:#9da5b4;transform:scaleX(1.0103);">/C</div>
<div class="ui" id="s9" style="left:2596.7px;top:1995.6px;font-size:30px;color:#9da5b4;transform:scaleX(0.9490);">Go Live</div>
<div class="ui" id="s10" style="left:2781.5px;top:1995.6px;font-size:30px;color:#ffffff;transform:scaleX(1.0105);">Prettier</div></div>
<svg class="abs" style="left:1438px;top:1278px" width="26" height="40" viewBox="1438 1278 26 40" shape-rendering="crispEdges"><g fill="#23262e"><rect x="1440" y="1280" width="21.2" height="5"/><rect x="1448" y="1282" width="5" height="32"/><rect x="1440" y="1311" width="21.2" height="5"/></g><g fill="#e8e4da"><rect x="1441" y="1281" width="8.1" height="3"/><rect x="1452" y="1281" width="8.2" height="3"/><rect x="1449.1" y="1282.6" width="2.9" height="30.8"/><rect x="1441" y="1312" width="8.1" height="3"/><rect x="1452" y="1312" width="8.2" height="3"/></g></svg>
</body></html>
